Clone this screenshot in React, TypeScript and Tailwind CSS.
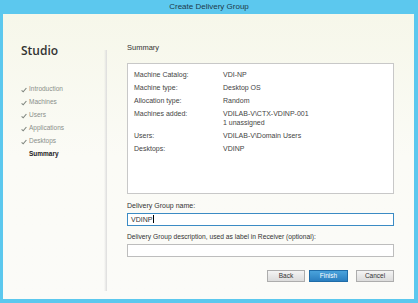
import React from "react";

const Check = () => (
  <svg width="6" height="6" viewBox="0 0 6 6" className="mr-[2px]">
    <path d="M0.6 3.3 L2.2 4.8 L5.4 1" fill="none" stroke="#7f857f" strokeWidth="1.1" />
  </svg>
);

export default function App() {
  const rows: [string, string[]][] = [
    ["Machine Catalog:", ["VDI-NP"]],
    ["Machine type:", ["Desktop OS"]],
    ["Allocation type:", ["Random"]],
    ["Machines added:", ["VDILAB-V\\CTX-VDINP-001", "1 unassigned"]],
    ["Users:", ["VDILAB-V\\Domain Users"]],
    ["Desktops:", ["VDINP"]],
  ];
  const nav = ["Introduction", "Machines", "Users", "Applications", "Desktops"];
  return (
    <div
      className="w-[418px] h-[303px] bg-[#5cc8ee] flex flex-col overflow-hidden"
      style={{ fontFamily: '"Liberation Sans", Arial, sans-serif' }}
    >
      <div className="h-[14px] flex items-center justify-center text-[8px] text-[#1e3a4a] leading-none">
        Create Delivery Group
      </div>
      <div className="flex-1 ml-[3px] mr-[4px] mb-[4px] flex bg-gradient-to-b from-[#f6f7ea] via-[#fbfbf6] to-[#fbfbf8]">
        <div className="w-[104px] flex flex-col pl-[18px] pt-[31px] relative">
          <div className="text-[12px] font-semibold text-[#333] leading-none" style={{ fontFamily: '"Open Sans", sans-serif' }}>Studio</div>
          <div className="mt-[28px] flex flex-col gap-[4px]">
            {nav.map((n) => (
              <div key={n} className="flex items-center h-[9px] text-[6.5px] text-[#8a8f8a] leading-none">
                <Check />
                {n}
              </div>
            ))}
            <div className="flex items-center h-[9px] pl-[8px] text-[6.5px] font-bold text-[#222] leading-none">
              Summary
            </div>
          </div>
          <div className="absolute right-0 top-[36px] bottom-[8px] w-[3px] bg-gradient-to-r from-transparent to-[#dcdcdc]" />
        </div>
        <div className="flex-1 flex flex-col pl-[20px] pr-[20px] pt-[30px]">
          <div className="text-[7.5px] text-[#333] leading-none">Summary</div>
          <div className="mt-[11px] h-[131px] bg-white border border-[#c8c8c8] pl-[6px] pt-[6px]">
            {rows.map(([k, vs]) => (
              <div key={k} className="flex mb-[4px]">
                <div className="w-[89px] text-[7px] text-[#444] leading-[9px]">{k}</div>
                <div className="flex flex-col">
                  {vs.map((v) => (
                    <div key={v} className="text-[7px] text-[#444] leading-[9px]">{v}</div>
                  ))}
                </div>
              </div>
            ))}
          </div>
          <div className="mt-[8px] text-[7px] text-[#333] leading-none">Delivery Group name:</div>
          <div className="mt-[4px] h-[13px] bg-white border border-[#3b8bc4] flex items-center pl-[3px] text-[7px] text-[#333] leading-none">
            VDINP<span className="w-[1px] h-[8px] bg-black ml-[0.5px]" />
          </div>
          <div className="mt-[8px] text-[6.7px] text-[#333] leading-none">
            Delivery Group description, used as label in Receiver (optional):
          </div>
          <div className="mt-[4px] h-[13px] bg-white border border-[#bdbdbd]" />
          <div className="mt-[13px] flex justify-end gap-[4px]">
            <div className="w-[38px] h-[12px] border border-[#adadad] bg-gradient-to-b from-[#f4f4f4] to-[#dcdcdc] flex items-center justify-center text-[6.5px] text-[#333] leading-none">
              Back
            </div>
            <div className="w-[39px] h-[12px] border border-[#1f6ca8] bg-gradient-to-b from-[#4aa3dc] to-[#2a7fc0] flex items-center justify-center text-[6.5px] text-white leading-none mr-[4px]">
              Finish
            </div>
            <div className="w-[38px] h-[12px] border border-[#adadad] bg-gradient-to-b from-[#f4f4f4] to-[#dcdcdc] flex items-center justify-center text-[6.5px] text-[#333] leading-none">
              Cancel
            </div>
          </div>
        </div>
      </div>
    </div>
  );
}
